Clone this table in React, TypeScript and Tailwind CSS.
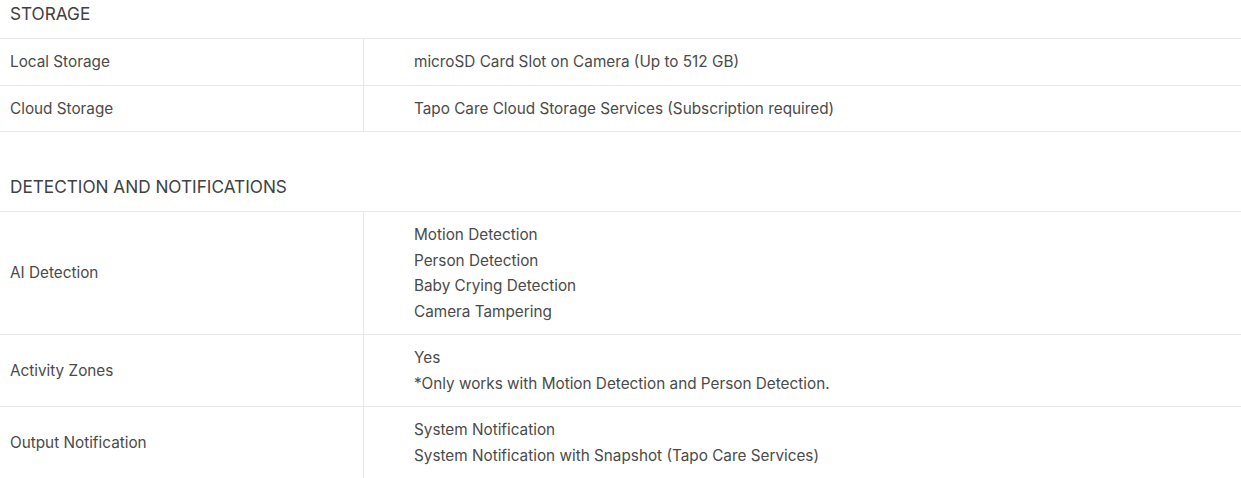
const sections = [
  {
    title: "STORAGE",
    rows: [
      { label: "Local Storage", values: ["microSD Card Slot on Camera (Up to 512 GB)"] },
      { label: "Cloud Storage", values: ["Tapo Care Cloud Storage Services (Subscription required)"] },
    ],
  },
  {
    title: "DETECTION AND NOTIFICATIONS",
    rows: [
      {
        label: "AI Detection",
        values: ["Motion Detection", "Person Detection", "Baby Crying Detection", "Camera Tampering"],
      },
      {
        label: "Activity Zones",
        values: ["Yes", "*Only works with Motion Detection and Person Detection."],
      },
      {
        label: "Output Notification",
        values: ["System Notification", "System Notification with Snapshot (Tapo Care Services)"],
      },
    ],
  },
];

export default function App() {
  return (
    <div className="w-[1241px] h-[478px] overflow-hidden bg-white text-[#4a4a4a] font-['Inter',sans-serif]">
      {sections.map((s, i) => (
        <section key={s.title} className={i > 0 ? "mt-[41px]" : ""}>
          <h3 className="px-[10px] pt-[4px] pb-[14px] text-[17.2px] leading-[20px] text-[#404040]">{s.title}</h3>
          <div className="border-t border-[#e8e8e8]">
            {s.rows.map((r) => (
              <div key={r.label} className="flex border-b border-[#e8e8e8] text-[15.3px] leading-[25.5px]">
                <div className="w-[364px] shrink-0 flex items-center px-[10px] py-[10px] border-r border-[#e8e8e8]">
                  {r.label}
                </div>
                <div className="flex-1 pl-[50px] py-[10px]">
                  {r.values.map((v) => (
                    <div key={v}>{v}</div>
                  ))}
                </div>
              </div>
            ))}
          </div>
        </section>
      ))}
    </div>
  );
}
